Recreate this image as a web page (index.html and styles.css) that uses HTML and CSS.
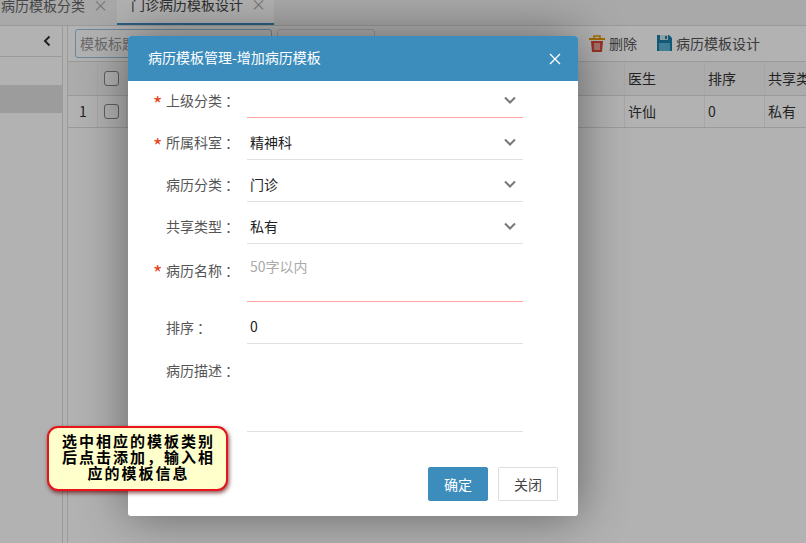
FILE: index.html
```html
<!DOCTYPE html>
<html lang="zh">
<head>
<meta charset="utf-8">
<title>病历模板管理</title>
<link rel="stylesheet" href="styles.css">
</head>
<body>
<div class="page">
  <nav class="tabs">
    <div class="tab first"><span>病历模板分类</span><i class="tab-x">×</i></div>
    <div class="tab active"><span>门诊病历模板设计</span><i class="tab-x">×</i></div>
  </nav>
  <div class="work">
    <aside class="side">
      <div class="side-head">
        <svg class="chev" width="10" height="12" viewBox="0 0 10 12"><path d="M7.5 1.500 3 6l4.500 4.500" fill="none" stroke="#333" stroke-width="2"/></svg>
      </div>
      <div class="side-gap"></div>
      <div class="side-row"></div>
    </aside>
    <main class="content">
      <div class="toolbar">
        <div class="search">模板标题</div>
        <div class="search second"></div>
        <div class="tools">
          <span class="tool">
            <svg width="16" height="17" viewBox="0 0 16 17"><rect x="0" y="3" width="16" height="2" fill="#e69a00"/><path d="M5 3V1h6v2" fill="none" stroke="#e69a00" stroke-width="1.500"/><path d="M2 6h12l-1 11H3z" fill="#dd4b39"/><path d="M6 8v7M8 8v7M10 8v7" stroke="#fff" stroke-width="1"/></svg>
            删除
          </span>
          <span class="tool">
            <svg width="15" height="16" viewBox="0 0 15 16"><path d="M0 0h12l3 3v13H0z" fill="#1c7ea8"/><rect x="3" y="0" width="8" height="5" fill="#cfe6f0"/><rect x="8" y="1" width="2" height="3" fill="#1c7ea8"/><rect x="2" y="8" width="11" height="8" fill="#5cb5d8"/></svg>
            病历模板设计
          </span>
        </div>
      </div>
      <div class="grid head">
        <div class="cell idx"></div>
        <div class="cell chk"><b class="box"></b></div>
        <div class="cell fill"></div>
        <div class="cell doc">医生</div>
        <div class="cell ord">排序</div>
        <div class="cell share">共享类型</div>
      </div>
      <div class="grid body-row">
        <div class="cell idx">1</div>
        <div class="cell chk"><b class="box"></b></div>
        <div class="cell fill"></div>
        <div class="cell doc">许仙</div>
        <div class="cell ord">0</div>
        <div class="cell share">私有</div>
      </div>
    </main>
  </div>
</div>

<div class="overlay"></div>

<section class="modal">
  <header class="modal-head">
    <h1>病历模板管理-增加病历模板</h1>
    <svg class="close" width="12" height="12" viewBox="0 0 12 12"><path d="M1 1l10 10M11 1 1 11" stroke="#fff" stroke-width="1.300"/></svg>
  </header>
  <form class="form">
    <div class="row top-row">
      <label class="label req">上级分类<span class="colon">：</span></label>
      <div class="field error"><svg class="arrow" width="12" height="8" viewBox="0 0 12 8"><path d="M1 1.500l5 5 5-5" fill="none" stroke="#777" stroke-width="2"/></svg></div>
    </div>
    <div class="row">
      <label class="label req">所属科室<span class="colon">：</span></label>
      <div class="field">精神科<svg class="arrow" width="12" height="8" viewBox="0 0 12 8"><path d="M1 1.500l5 5 5-5" fill="none" stroke="#777" stroke-width="2"/></svg></div>
    </div>
    <div class="row">
      <label class="label">病历分类<span class="colon">：</span></label>
      <div class="field">门诊<svg class="arrow" width="12" height="8" viewBox="0 0 12 8"><path d="M1 1.500l5 5 5-5" fill="none" stroke="#777" stroke-width="2"/></svg></div>
    </div>
    <div class="row">
      <label class="label">共享类型<span class="colon">：</span></label>
      <div class="field">私有<svg class="arrow" width="12" height="8" viewBox="0 0 12 8"><path d="M1 1.500l5 5 5-5" fill="none" stroke="#777" stroke-width="2"/></svg></div>
    </div>
    <div class="row name-row">
      <label class="label req">病历名称<span class="colon">：</span></label>
      <div class="field error placeholder">50字以内</div>
    </div>
    <div class="row sort-row">
      <label class="label">排序<span class="colon">：</span></label>
      <div class="field">0</div>
    </div>
    <div class="row desc-row">
      <label class="label">病历描述<span class="colon">：</span></label>
      <div class="field"></div>
    </div>
  </form>
  <footer class="modal-foot">
    <button type="button" class="btn primary">确定</button>
    <button type="button" class="btn">关闭</button>
  </footer>
</section>

<div class="note">选中相应的模板类别<br>后点击添加，输入相<br>应的模板信息</div>
</body>
</html>
```
FILE: styles.css
```css
* { box-sizing: border-box; }
html, body { margin: 0; height: 100%; overflow: hidden; }
body {
  width: 806px;
  height: 543px;
  position: relative;
  background: #fff;
  color: #333;
  font: 14px/20px "Noto Sans CJK SC", "Liberation Sans", sans-serif;
}
.page { height: 543px; display: flex; flex-direction: column; overflow: hidden; }

.tabs { height: 26px; display: flex; border-bottom: 1px solid #ddd; background: #f3f3f3; overflow: hidden; }
.tab { display: flex; align-items: center; height: 25px; line-height: 10px; padding-bottom: 15px; }
.tab.first { width: 117px; padding-left: 1px; color: #666; }
.tab.active { width: 157px; padding-left: 14px; color: #444; background: #fff; border-bottom: 2px solid #3c8dbc; height: 25px; }
.tab-x { font-style: normal; font-size: 15px; color: #aaa; }
.tab.first .tab-x { margin-left: 8px; }
.tab.active .tab-x { margin-left: 8px; }

.work { flex: 1; display: flex; }
.side { width: 63px; border-right: 1px solid #ddd; }
.side-head { height: 31px; border-bottom: 1px solid #ddd; display: flex; align-items: center; justify-content: flex-end; padding-right: 10px; }
.side-gap { height: 28px; }
.side-row { height: 28px; background: #e0e0e0; }
.content { flex: 1; margin-left: 4px; border-left: 1px solid #ddd; min-width: 0; overflow: hidden; }

.toolbar { height: 36px; display: flex; align-items: center; padding: 0 0 0 7px; border-bottom: 1px solid #ddd; gap: 5px; }
.search { width: 197px; height: 29px; border: 1px solid #9dc3dc; border-radius: 3px; padding: 3px 4px; color: #999; }
.search.second { width: 98px; border-color: #ddd; }
.tools { margin-left: auto; display: flex; gap: 20px; padding-right: 46px; color: #555; line-height: 18px; padding-bottom: 1px; }
.tool { display: flex; align-items: center; gap: 4px; }

.grid { display: flex; border-bottom: 1px solid #ddd; }
.head { height: 34px; background: #f7f7f7; }
.body-row { height: 32px; }
.cell { display: flex; align-items: center; border-right: 1px solid #eee; padding: 0 0 2px 3px; color: #333; white-space: nowrap; }
.idx { width: 30px; padding-left: 11px; }
.chk { width: 29px; padding: 0 0 0 6px; }
.fill { flex: 1; }
.doc { width: 80px; }
.ord { width: 60px; }
.share { width: 41px; overflow: hidden; border-right: 0; }
.box { width: 15px; height: 15px; border: 1px solid #888; border-radius: 3px; background: #fff; }

.overlay { position: absolute; inset: 0; background: rgba(0, 0, 0, .3); }

.modal {
  position: absolute;
  left: 128px;
  top: 36px;
  width: 450px;
  height: 480px;
  background: #fff;
  border-radius: 3px;
  box-shadow: 0 0 50px rgba(0, 0, 0, .45);
  display: flex;
  flex-direction: column;
}
.modal-head {
  height: 45px;
  flex: none;
  background: #3c8dbc;
  border-radius: 3px 3px 0 0;
  display: flex;
  align-items: center;
  justify-content: space-between;
  padding: 0 17px 0 20px;
  color: #fff;
}
.modal-head h1 { margin: 0 0 3px; font-size: 14px; font-weight: 400; }

.form { display: flex; flex-direction: column; }
.row { display: grid; grid-template-columns: 119px 276px; height: 42px; }
.top-row { height: 37px; }
.name-row { height: 58px; }
.desc-row { height: 88px; }
.label { position: relative; padding: 14px 0 0 38px; color: #555; white-space: nowrap; }
.top-row .label { padding-top: 9px; }
.name-row .label, .desc-row .label { padding-top: 16px; }
.sort-row .label { padding-top: 15px; }
.colon { font-family: "Noto Sans CJK TC", sans-serif; margin-left: 3px; }
.label.req::before {
  content: "*";
  position: absolute;
  left: 25px;
  top: 18px;
  color: #e8401c;
  font-size: 20px;
}
.top-row .label.req::before { top: 13px; }
.name-row .label.req::before { top: 19px; }

.field {
  position: relative;
  border-bottom: 1px solid #e0e0e0;
  padding: 14px 3px 0;
  color: #222;
}
.top-row .field { padding-top: 9px; }
.field.error { border-bottom-color: #ffa3a3; }
.placeholder { color: #aaa; padding-top: 12px; }
.arrow { position: absolute; right: 7px; bottom: 13px; }

.modal-foot { flex: 1; display: flex; justify-content: flex-end; align-items: flex-end; gap: 10px; padding: 0 20px 15px; }
.btn {
  width: 60px;
  height: 34px;
  padding: 0;
  border: 1px solid #ddd;
  border-radius: 2px;
  background: #fff;
  color: #444;
  font: inherit;
}
.btn.primary { background: #3c8dbc; border-color: #3c8dbc; color: #fff; }

.note {
  position: absolute;
  left: 47px;
  top: 426px;
  width: 181px;
  height: 65px;
  padding: 5px 0 0 2px;
  background: #ffffcc;
  border: 2px solid #e8141c;
  border-radius: 11px;
  box-shadow: 1px 2px 4px rgba(90, 0, 0, .7);
  color: #000;
  text-align: center;
  font-weight: 700;
  font-size: 15px;
  line-height: 16px;
  letter-spacing: 2px;
}
```
